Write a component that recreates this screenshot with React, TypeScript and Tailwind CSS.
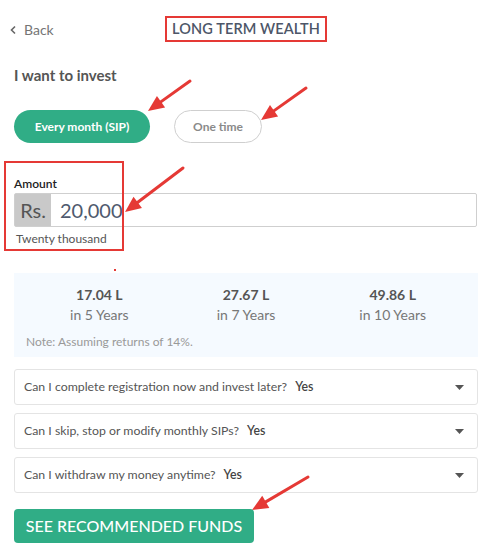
import React from "react";

const faqs = [
  "Can I complete registration now and invest later?",
  "Can I skip, stop or modify monthly SIPs?",
  "Can I withdraw my money anytime?",
];

const stats = [
  { v: "17.04 L", l: "in 5 Years" },
  { v: "27.67 L", l: "in 7 Years" },
  { v: "49.86 L", l: "in 10 Years" },
];

function Arrow({ x1, y1, x2, y2 }: { x1: number; y1: number; x2: number; y2: number }) {
  const dx = x2 - x1;
  const dy = y2 - y1;
  const len = Math.sqrt(dx * dx + dy * dy);
  const ux = dx / len;
  const uy = dy / len;
  const hl = 16;
  const hw = 7;
  const bx = x2 - ux * hl;
  const by = y2 - uy * hl;
  const px = -uy;
  const py = ux;
  return (
    <g>
      <line x1={x1} y1={y1} x2={bx + ux * 2} y2={by + uy * 2} stroke="#e53935" strokeWidth={3} strokeLinecap="round" />
      <polygon
        points={`${x2},${y2} ${bx + px * hw},${by + py * hw} ${bx - px * hw},${by - py * hw}`}
        fill="#e53935"
      />
    </g>
  );
}

export default function App() {
  return (
    <div
      className="relative w-[492px] h-[554px] bg-white overflow-hidden"
      style={{ fontFamily: "Lato, 'Open Sans', sans-serif" }}
    >
      {/* header */}
      <div className="grid grid-cols-[1fr_auto_1fr] items-center pt-4 px-[9px]">
        <div className="flex items-center gap-[6px] text-[14px] text-[#757575]">
          <svg width="9" height="10" viewBox="0 0 9 10" className="mt-[2px]">
            <path d="M6 1.5 L2.5 5 L6 8.5" stroke="#666" strokeWidth="1.6" fill="none" />
          </svg>
          <span>Back</span>
        </div>
        <div className="border-2 border-[#e53935] px-[5px] h-[26px] flex items-center text-[14.5px] font-semibold text-[#4d5668] tracking-[0.1px]">
          LONG TERM WEALTH
        </div>
        <div />
      </div>

      <div className="px-[14px]">
        <div className="mt-[23px] text-[15px] font-bold text-[#555] leading-[20px]">I want to invest</div>

        {/* pills */}
        <div className="mt-[25px] flex gap-[24px]">
          <div className="w-[136px] h-[33px] rounded-full bg-[#30ad86] flex items-center justify-center text-white text-[12px] font-bold">
            Every month (SIP)
          </div>
          <div className="w-[88px] h-[33px] rounded-full border border-[#cfcfcf] flex items-center justify-center text-[#8a8a8a] text-[12px] font-bold">
            One time
          </div>
        </div>

        {/* amount */}
        <div className="mt-[33px] text-[12px] font-semibold text-[#222] leading-[16px]">Amount</div>
        <div className="mt-[1px] h-[34px] flex border border-[#cfcfcf] rounded-[2px] w-[463px]">
          <div className="w-[36px] bg-[#c9c9c9] flex items-center justify-center text-[20px] text-[#555]">Rs.</div>
          <div className="pl-[9px] flex items-center text-[20px] text-[#4f5a6e]">20,000</div>
        </div>
        <div className="mt-[4px] pl-[2px] text-[12px] text-[#555] leading-[16px]">Twenty thousand</div>

        {/* stats */}
        <div className="mt-[26px] h-[84px] bg-[#f5faff] px-[12px] pt-[12px]">
          <div className="grid grid-cols-3">
            {stats.map((s) => (
              <div key={s.v} className="flex flex-col items-center">
                <div className="text-[14px] font-bold text-[#555] leading-[20px]">{s.v}</div>
                <div className="text-[14px] text-[#777] leading-[20px]">{s.l}</div>
              </div>
            ))}
          </div>
          <div className="mt-[9px] text-[12px] text-[#999] leading-[16px]">Note: Assuming returns of 14%.</div>
        </div>

        {/* faqs */}
        <div className="mt-[12px] flex flex-col gap-[8px]">
          {faqs.map((q) => (
            <div
              key={q}
              className="h-[36px] border border-[#e4e4e4] rounded-[3px] flex items-center justify-between pl-[9px] pr-[13px] text-[12.3px]"
            >
              <div className="text-[#555]">
                {q}
                <span className="ml-[8px] font-semibold text-[#444]">Yes</span>
              </div>
              <svg width="9" height="5" viewBox="0 0 9 5">
                <path d="M0 0 H9 L4.5 5 Z" fill="#555" />
              </svg>
            </div>
          ))}
        </div>

        {/* cta */}
        <div className="mt-[16px] w-[240px] h-[34px] rounded-[4px] bg-[#30ad86] flex items-center justify-center text-white text-[16px] font-medium">
          SEE RECOMMENDED FUNDS
        </div>
      </div>

      {/* annotations */}
      <div className="absolute left-[4px] top-[161px] w-[120px] h-[90px] border-2 border-[#e53935] pointer-events-none" />
      <div className="absolute left-[114px] top-[269px] w-[2px] h-[2px] bg-[#e53935]" />
      <svg className="absolute inset-0 pointer-events-none" width="492" height="554">
        <Arrow x1={190} y1={81} x2={148} y2={111} />
        <Arrow x1={306} y1={88} x2={261} y2={120} />
        <Arrow x1={183} y1={168} x2={125} y2={212} />
        <Arrow x1={308} y1={477} x2={252} y2={510} />
      </svg>
    </div>
  );
}
